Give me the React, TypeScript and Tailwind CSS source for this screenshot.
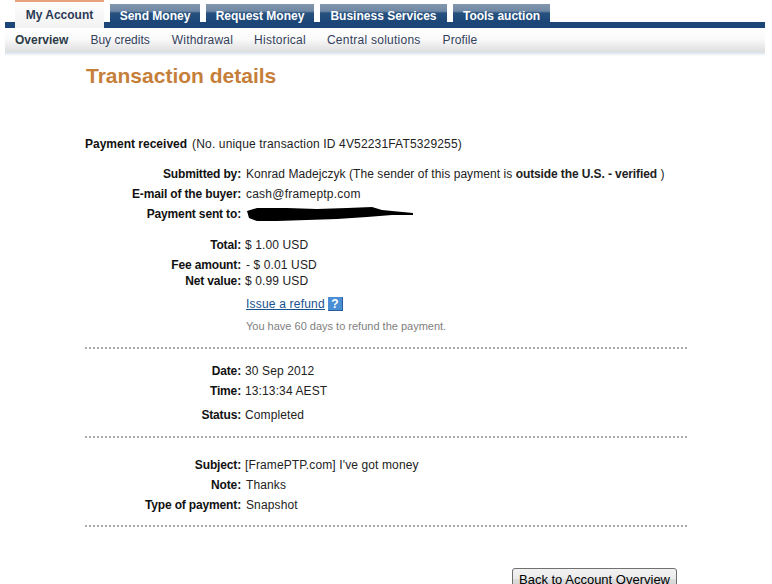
const tabs = [
  { label: "Send Money", w: "w-[90px]" },
  { label: "Request Money", w: "w-[108px]" },
  { label: "Business Services", w: "w-[127px]" },
  { label: "Tools auction", w: "w-[97px]" },
];

const subNav = [
  { label: "Buy credits", cls: "ml-[22px]" },
  { label: "Withdrawal", cls: "ml-[22px] tracking-[0.2px]" },
  { label: "Historical", cls: "ml-[21px] tracking-[0.25px]" },
  { label: "Central solutions", cls: "ml-[21px] tracking-[0.25px]" },
  { label: "Profile", cls: "ml-[22px] tracking-[0.1px]" },
];

const Row = ({
  label,
  className,
  valueClass = "ml-[5px] tracking-[0.12px]",
  children,
}: {
  label: string;
  className: string;
  valueClass?: string;
  children: React.ReactNode;
}) => (
  <div className={`flex h-4 leading-4 ${className}`}>
    <div className="w-[156px] text-right font-bold tracking-[-0.15px] text-[#111]">{label}</div>
    <div className={`text-[#222] ${valueClass}`}>{children}</div>
  </div>
);

const Dots = ({ className }: { className: string }) => (
  <div className={`h-0 w-[602px] border-t-2 border-dotted border-[#aaa] ${className}`} />
);

// values that sit one pixel further left in the original page
const shifted = "ml-[4px] tracking-[0.12px]";

export default function App() {
  return (
    <div className="h-[584px] w-[772px] overflow-hidden bg-white text-[12px] font-['Liberation_Sans',Arial,sans-serif]">
      {/* top tabs */}
      <div className="ml-[5px] w-[760px]">
        <div className="flex h-[28px] items-start gap-[6px] bg-[linear-gradient(to_bottom,#fff_0,#fff_22px,#1c4677_22px)] pl-[10px]">
          <div className="flex h-[28px] w-[89px] items-center justify-center border-t-2 border-[#e8a27c] bg-[linear-gradient(to_bottom,#fdfdfd,#f2f2f2)] pb-[1px] font-bold text-[#2b3a55]">
            My Account
          </div>
          {tabs.map((t) => (
            <div
              key={t.label}
              className={`mt-[4px] flex h-[18px] items-center justify-center bg-[linear-gradient(to_bottom,#8497ad,#6f88a5_40%,#27527f_50%,#1c4677)] pt-[5px] font-bold text-white ${t.w}`}
            >
              {t.label}
            </div>
          ))}
        </div>
        {/* sub nav */}
        <div className="flex h-[24px] items-center bg-[linear-gradient(to_bottom,#fff_0%,#fafafa_45%,#dedede_100%)] pl-[10px] text-[#33415c]">
          <span className="font-bold text-[#2b3a45]">Overview</span>
          {subNav.map((s) => (
            <span key={s.label} className={s.cls}>
              {s.label}
            </span>
          ))}
        </div>
        <div className="h-[4px] bg-[linear-gradient(to_bottom,#d5deea,#fff)]" />
      </div>

      {/* content */}
      <div className="pl-[85px]">
        <h1 className="mt-[6px] h-[28px] pl-[1px] text-[21px] leading-[28px] font-bold text-[#c67f3a]">Transaction details</h1>

        <div className="mt-[46px] h-4 leading-4 text-[#222]">
          <span className="font-bold text-[#111]">Payment received</span>
          <span className="ml-[5px] tracking-[0.16px]">(No. unique transaction ID 4V52231FAT5329255)</span>
        </div>

        <Row label="Submitted by:" className="mt-[14px]" valueClass="ml-[5px] tracking-[0.06px]">
          Konrad Madejczyk (The sender of this payment is <b className="tracking-[-0.1px]">outside the U.S. - verified</b> )
        </Row>
        <Row label="E-mail of the buyer:" className="mt-[4px]" valueClass="ml-[5px] tracking-[0.22px]">cash@frameptp.com</Row>
        <Row label="Payment sent to:" className="mt-[4px]">
          <svg width="168" height="16" viewBox="0 0 168 16" className="ml-[1px]">
            <path
              d="M0 5 L10 2 L40 2 L70 3 L100 2 L125 1 L135 4 L145 5 L166 7 L166 9 L145 9 L120 11 L90 13 L60 14 L30 15 L10 15 L2 12 Z"
              fill="#000"
            />
          </svg>
        </Row>

        <Row label="Total:" className="mt-[15px]" valueClass={shifted}>$ 1.00 USD</Row>
        <Row label="Fee amount:" className="mt-[4px]">- $ 0.01 USD</Row>
        <Row label="Net value:" className="mt-0" valueClass={shifted}>$ 0.99 USD</Row>

        <div className="mt-[7px] ml-[161px] flex h-4 items-center leading-4">
          <span className="tracking-[0.2px] text-[#17518f] underline">Issue a refund</span>
          <span className="ml-[3px] flex h-[14px] w-[15px] items-center justify-center border-r border-b border-[#2a5f9e] bg-[#4a8fd6] text-[12px] font-bold text-white">?</span>
        </div>
        <div className="mt-[6px] ml-[161px] h-4 text-[11px] leading-4 text-[#808080]">
          You have 60 days to refund the payment.
        </div>

        <Dots className="mt-[13px]" />

        <Row label="Date:" className="mt-[14px]" valueClass={shifted}>30 Sep 2012</Row>
        <Row label="Time:" className="mt-[4px]" valueClass={shifted}>13:13:34 AEST</Row>
        <Row label="Status:" className="mt-[8px]" valueClass={shifted}>Completed</Row>

        <Dots className="mt-[13px]" />

        <Row label="Subject:" className="mt-[19px]" valueClass={shifted}>[FramePTP.com] I've got money</Row>
        <Row label="Note:" className="mt-[4px]">Thanks</Row>
        <Row label="Type of payment:" className="mt-[4px]">Snapshot</Row>

        <Dots className="mt-[12px]" />

        <div className="mt-[41px] flex w-[592px] justify-end">
          <button className="h-[22px] w-[165px] rounded-[3px] border border-[#707070] bg-[linear-gradient(to_bottom,#f2f2f2,#ebebeb_50%,#dddddd_50%,#cfcfcf)] text-[13px] leading-none text-black">
            Back to Account Overview
          </button>
        </div>
      </div>
    </div>
  );
}
